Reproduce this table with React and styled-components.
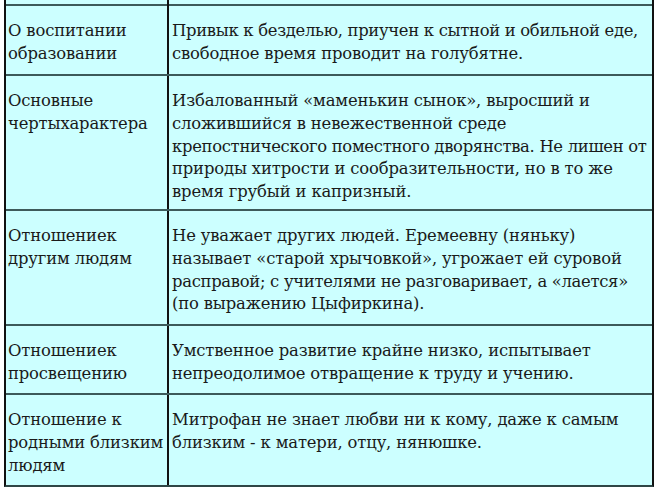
import React from 'react';
import styled, { createGlobalStyle } from 'styled-components';

const GlobalStyle = createGlobalStyle`
  html, body {
    margin: 0;
    padding: 0;
    background: #ffffff;
  }
`;

const Page = styled.div`
  width: 659px;
  height: 490px;
  overflow: hidden;
  padding-left: 4px;
  box-sizing: border-box;
  background: #ffffff;
`;

const Table = styled.div`
  width: 650px;
  box-sizing: border-box;
  border-left: 2px solid #111;
  border-right: 2px solid #111;
  border-bottom: 2px solid #2f4646;
  background: #ccffff;
  font-family: "DejaVu Serif", serif;
  font-size: 16.4px;
  letter-spacing: -0.15px;
  line-height: 22.8px;
  color: #1a1a1a;
`;

const Row = styled.div`
  display: flex;
  box-sizing: border-box;
  height: ${(p) => p.h}px;
  border-top: ${(p) => (p.first ? 'none' : '2px solid #3d5a5a')};
`;

const Label = styled.div`
  width: 163px;
  flex-shrink: 0;
  border-right: 2px solid #111;
  padding: 14px 0 0 2px;
  box-sizing: border-box;
`;

const Text = styled.div`
  flex: 1;
  min-width: 0;
  padding: 14px 0 0 3px;
  box-sizing: border-box;
`;

const Line = styled.div`
  white-space: nowrap;
  letter-spacing: ${(p) => (p.tight ? '-0.3px' : 'inherit')};
`;

const rows = [
  {
    h: 68,
    label: ['О воспитании', 'образовании'],
    text: ['Привык к безделью, приучен к сытной и обильной еде,', 'свободное время проводит на голубятне.'],
  },
  {
    h: 133,
    label: ['Основные', 'чертыхарактера'],
    text: [
      'Избалованный «маменькин сынок», выросший и',
      'сложившийся в невежественной среде',
      'крепостнического поместного дворянства. Не лишен от',
      'природы хитрости и сообразительности, но в то же',
      'время грубый и капризный.',
    ],
  },
  {
    h: 113,
    label: ['Отношениек', 'другим людям'],
    text: [
      'Не уважает других людей. Еремеевну (няньку)',
      'называет «старой хрычовкой», угрожает ей суровой',
      'расправой; с учителями не разговаривает, а «лается»',
      '(по выражению Цыфиркина).',
    ],
  },
  {
    h: 67,
    label: ['Отношениек', 'просвещению'],
    text: ['Умственное развитие крайне низко, испытывает', 'непреодолимое отвращение к труду и учению.'],
  },
  {
    h: 90,
    label: ['Отношение к', 'родными близким', 'людям'],
    text: ['Митрофан не знает любви ни к кому, даже к самым', 'близким - к матери, отцу, нянюшке.'],
  },
];

export default function App() {
  return (
    <Page>
      <GlobalStyle />
      <Table>
        <Row h={4} first>
          <Label />
          <Text />
        </Row>
        {rows.map((r, i) => (
          <Row key={i} h={r.h + 2}>
            <Label>
              {r.label.map((l, j) => (
                <Line key={j}>{l}</Line>
              ))}
            </Label>
            <Text>
              {r.text.map((l, j) => (
                <Line key={j} tight={l.length > 50}>
                  {l}
                </Line>
              ))}
            </Text>
          </Row>
        ))}
      </Table>
    </Page>
  );
}
